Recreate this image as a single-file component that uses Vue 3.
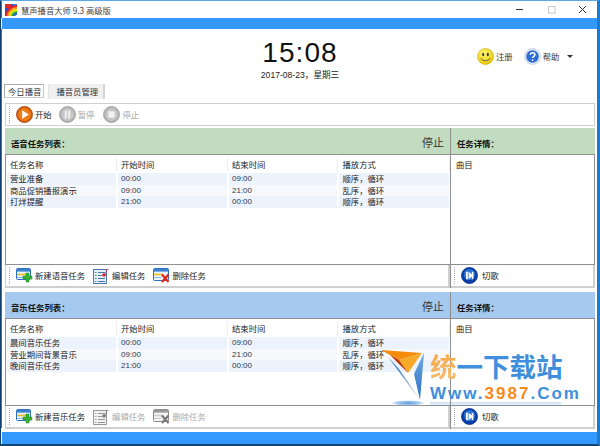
<script setup>
const panels = [
  {
    key: 'voice', tone: 'green', title: '语音任务列表：', add: '新建语音任务', off: false,
    rows: [
      ['营业准备', '00:00', '09:00', '顺序，循环'],
      ['商品促销播报演示', '09:00', '21:00', '乱序，循环'],
      ['打烊提醒', '21:00', '00:00', '顺序，循环']
    ]
  },
  {
    key: 'music', tone: 'blue', title: '音乐任务列表：', add: '新建音乐任务', off: true,
    rows: [
      ['晨间音乐任务', '00:00', '09:00', '顺序，循环'],
      ['营业期间背景音乐', '09:00', '21:00', '乱序，循环'],
      ['晚间音乐任务', '21:00', '00:00', '顺序，循环']
    ]
  }
]
const heads = ['任务名称', '开始时间', '结束时间', '播放方式']
</script>

<template>
  <div class="window">
    <div class="titlebar">
      <svg class="applogo" viewBox="0 0 12 12" width="12" height="12">
        <rect width="12" height="12" fill="#2b4fd0" />
        <rect width="6" height="4" fill="#e02a2a" />
        <rect x="8" width="4" height="12" fill="#3a7fe0" />
        <circle cx="12" cy="13" r="12" fill="#e8262a" />
        <circle cx="12" cy="13" r="10" fill="#f6a11c" />
        <circle cx="12" cy="13" r="8" fill="#f4e31e" />
        <circle cx="12" cy="13" r="6" fill="#2fae3a" />
        <circle cx="12" cy="13" r="4" fill="#2a62d8" />
        <circle cx="12" cy="13" r="2" fill="#fff" />
      </svg>
      <span class="apptitle">慧声播音大师 9.3 高级版</span>
      <div class="winbtns">
        <svg width="9" height="9" viewBox="0 0 9 9"><path d="M1 4.5h7" stroke="#333" stroke-width="1" /></svg>
        <svg width="9" height="9" viewBox="0 0 9 9"><rect x="1.5" y="1.5" width="6.5" height="6.5" fill="none" stroke="#c8c8c8" /></svg>
        <svg width="9" height="9" viewBox="0 0 9 9"><path d="M1 1l7 7M8 1l-7 7" stroke="#333" stroke-width="1" /></svg>
      </div>
    </div>
    <div class="bluebar"></div>

    <div class="content">
      <header class="top">
        <div class="clock">
          <div class="time">15:08</div>
          <div class="date">2017-08-23，星期三</div>
        </div>
        <div class="topmenu">
          <svg width="17" height="17" viewBox="0 0 17 17">
            <defs>
              <radialGradient id="sm" cx="40%" cy="30%" r="70%"><stop offset="0" stop-color="#fff97a" /><stop offset="1" stop-color="#e8c800" /></radialGradient>
            </defs>
            <circle cx="8.5" cy="8.5" r="8" fill="url(#sm)" stroke="#c9a800" stroke-width=".6" />
            <ellipse cx="6.2" cy="6.5" rx="1" ry="1.7" fill="#333" />
            <ellipse cx="10.8" cy="6.5" rx="1" ry="1.7" fill="#333" />
            <path d="M3.8 10.2c1.6 3.2 7.8 3.2 9.4 0" fill="none" stroke="#555" stroke-width=".9" />
          </svg>
          <span class="mlabel reg">注册</span>
          <svg class="help" width="17" height="17" viewBox="0 0 17 17">
            <circle cx="8.5" cy="8.5" r="8" fill="#dfe6f3" stroke="#b8c4dc" stroke-width=".6" />
            <circle cx="8.5" cy="8.5" r="6.2" fill="#2d6fd0" />
            <path d="M6.3 6.8c.2-2.6 4.6-2.6 4.6 0 0 1.7-2.3 1.6-2.3 3.3" fill="none" stroke="#fff" stroke-width="1.5" />
            <circle cx="8.6" cy="12.1" r=".9" fill="#fff" />
          </svg>
          <span class="mlabel">帮助</span>
          <span class="caret"></span>
        </div>
      </header>

      <nav class="tabs">
        <span class="tab active">今日播音</span>
        <span class="tab">播音员管理</span>
      </nav>

      <div class="playbar">
        <span class="grip"></span>
        <span class="tool first">
          <svg width="17" height="17" viewBox="0 0 17 17">
            <circle cx="8.5" cy="8.5" r="8" fill="#d9600f" stroke="#9c3f08" stroke-width=".8" />
            <circle cx="8.5" cy="8.5" r="6.2" fill="#ee7d17" />
            <path d="M6.2 4.2l6.6 4.3-6.6 4.3z" fill="#fff" />
          </svg>
          <span class="lbl">开始</span>
        </span>
        <span class="tool off">
          <svg width="17" height="17" viewBox="0 0 17 17">
            <circle cx="8.5" cy="8.5" r="8" fill="#b4b4b4" stroke="#999" stroke-width=".8" />
            <circle cx="8.5" cy="8.5" r="6.2" fill="#c6c6c6" />
            <path d="M5.8 4.5h2v8h-2zM9.2 4.5h2v8h-2z" fill="#f2f2f2" />
          </svg>
          <span class="lbl">暂停</span>
        </span>
        <span class="tool off stop">
          <svg width="17" height="17" viewBox="0 0 17 17">
            <circle cx="8.5" cy="8.5" r="8" fill="#b4b4b4" stroke="#999" stroke-width=".8" />
            <circle cx="8.5" cy="8.5" r="6.2" fill="#c6c6c6" />
            <rect x="5.3" y="5.3" width="6.4" height="6.4" fill="#f2f2f2" />
          </svg>
          <span class="lbl">停止</span>
        </span>
      </div>

      <section v-for="p in panels" :key="p.key" class="panel" :class="[p.tone, p.key]">
        <div class="leftcol">
          <div class="phead">
            <b>{{ p.title }}</b>
            <span class="state">停止</span>
          </div>
          <div class="plist">
            <div class="grid headrow">
              <span v-for="h in heads" :key="h">{{ h }}</span>
            </div>
            <div v-for="(r, i) in p.rows" :key="r[0]" class="grid datarow" :class="{ alt: i === 1 }">
              <span v-for="(c, j) in r" :key="j" :class="{ num: j === 1 || j === 2 }">{{ c }}</span>
            </div>
          </div>
          <div class="pbar">
            <span class="grip"></span>
            <span class="tool addtool">
              <svg width="17" height="15" viewBox="0 0 17 15">
                <rect x=".5" y=".5" width="14" height="11" rx="1" fill="#eaf2fb" stroke="#2f6fc0" />
                <rect x="1" y="1" width="13" height="2.6" fill="#3c80d0" />
                <path d="M1 6.5h9" stroke="#e8c020" stroke-width="1.6" />
                <path d="M1 9.5h7" stroke="#8fb5e0" stroke-width="1" />
                <path d="M10 5h3v3h3v3h-3v3h-3v-3H7V8h3z" fill="#36b030" stroke="#1f8a20" stroke-width=".5" />
              </svg>
              <span class="lbl">{{ p.add }}</span>
            </span>
            <span class="tool edittool" :class="{ off: p.off }">
              <svg class="ico" width="16" height="16" viewBox="0 0 16 16">
                <rect x=".5" y="1.5" width="13" height="14" fill="#e6eef8" stroke="#4a78b0" />
                <path d="M2 4.5h1.5M2 7.5h1.5M2 10.5h1.5M2 13.5h1.5" stroke="#28a040" stroke-width="1.2" />
                <path d="M5 4.5h7M5 7.5h4M5 10.5h7M5 13.5h7" stroke="#4a78b0" stroke-width="1" />
                <circle cx="11" cy="7" r="1.8" fill="#d8262a" />
                <path d="M12.5 6.5L14 1l1.5 1" fill="none" stroke="#b03030" stroke-width=".8" />
              </svg>
              <span class="lbl">编辑任务</span>
            </span>
            <span class="tool deltool" :class="{ off: p.off }">
              <svg class="ico" width="17" height="15" viewBox="0 0 17 15">
                <rect x=".5" y=".5" width="15" height="12" rx="1" fill="#eaf2fb" stroke="#2f6fc0" />
                <rect x="1" y="1" width="14" height="2.6" fill="#3c80d0" />
                <path d="M1 6.5h9" stroke="#e8c020" stroke-width="1.6" />
                <path d="M1 9.5h7" stroke="#8fb5e0" stroke-width="1" />
                <path d="M9 6.5l6.5 7.5M15.5 6.5L9 14" stroke="#e0261c" stroke-width="2.2" />
              </svg>
              <span class="lbl">删除任务</span>
            </span>
          </div>
        </div>
        <div class="rightcol">
          <div class="phead"><b>任务详情：</b></div>
          <div class="plist detail">曲目</div>
          <div class="pbar">
            <span class="grip"></span>
            <span class="tool nexttool">
              <svg width="17" height="17" viewBox="0 0 17 17">
                <circle cx="8.5" cy="8.5" r="8" fill="#0b3fa8" stroke="#07308a" stroke-width=".8" />
                <circle cx="8.5" cy="7.5" r="5.6" fill="#2a73d8" />
                <path d="M5 4.8h1.8v7.4H5zM7.6 4.8l4.6 3.7-4.6 3.7z" fill="#fff" />
                <rect x="10.8" y="4.8" width="1.6" height="7.4" fill="#fff" />
              </svg>
              <span class="lbl">切歌</span>
            </span>
          </div>
        </div>
      </section>
    </div>

    <div class="footerbar"></div>

    <div class="watermark">
      <svg class="wmlogo" width="46" height="60" viewBox="0 0 46 60">
        <defs>
          <linearGradient id="wmb" x1="0" y1="0" x2="1" y2="1"><stop offset="0" stop-color="#2f74c4" /><stop offset="1" stop-color="#8db8e4" /></linearGradient>
          <linearGradient id="wmr" x1="0" y1="0" x2="0" y2="1"><stop offset="0" stop-color="#6fa8e0" /><stop offset="1" stop-color="#2a72c4" /></linearGradient>
          <radialGradient id="wms"><stop offset="0" stop-color="#5b9bdc" /><stop offset=".7" stop-color="#a9cbee" /><stop offset="1" stop-color="#a9cbee" stop-opacity="0" /></radialGradient>
        </defs>
        <path d="M0 3L41 6 18 13z" fill="#f58c0c" />
        <path d="M18 13L41 6 27 26z" fill="#f7a928" />
        <path d="M9 8L27 26 18 13z" fill="#b9380f" />
        <path d="M7 10L39 53 18 22z" fill="url(#wmb)" />
        <path d="M43 6L39 53 33 27z" fill="url(#wmr)" />
        <ellipse cx="27" cy="56" rx="17" ry="2.8" fill="url(#wms)" />
      </svg>
      <div class="wmtext">
        <div class="wmcn"><span class="wmorange">统</span>一下载站</div>
        <div class="wmen">Www.<span class="wmo2">3987</span>.Com</div>
        <div class="wmreflect"></div>
      </div>
    </div>
  </div>
</template>

<style scoped>
.window {
  position: relative;
  width: 600px;
  height: 446px;
  box-sizing: border-box;
  display: flex;
  flex-direction: column;
  overflow: hidden;
  background: #fff;
  border-left: 1px solid #10406e;
  border-right: 3px solid #1a7ccf;
  border-top: 1px solid #5aa9e6;
  border-bottom: 2px solid #12456f;
  font-family: "Noto Sans CJK SC", "Liberation Sans", sans-serif;
  font-size: 8.35px;
  color: #222;
  line-height: 12px;
}
.titlebar {
  height: 17px;
  flex: none;
  display: flex;
  align-items: center;
  padding-left: 3px;
  border-left: 1px solid #1a7ccf;
}
.applogo { margin-right: 4px; margin-top: 1px; }
.apptitle { font-size: 8.3px; color: #444; }
.winbtns {
  margin-left: auto;
  display: flex;
  gap: 22.5px;
  padding-right: 10px;
}
.bluebar {
  height: 11px;
  flex: none;
  background: #3399ff;
  margin-left: 1px;
}
.content {
  flex: 1;
  display: flex;
  flex-direction: column;
  min-height: 0;
  border-left: 1px solid #1a7ccf;
  padding: 0 2px 0 3px;
  background: #fff;
}
.top {
  height: 55px;
  flex: none;
  position: relative;
  display: flex;
  justify-content: center;
}
.clock { text-align: center; padding-top: 9px; }
.time {
  font-family: "Liberation Sans", sans-serif;
  font-size: 28px;
  line-height: 30px;
  letter-spacing: 1.1px;
  color: #111;
}
.date {
  font-size: 8.6px;
  line-height: 12px;
  margin-top: 1px;
  font-family: "Liberation Sans", "Noto Sans CJK SC", sans-serif;
  color: #222;
  white-space: nowrap;
}
.topmenu {
  position: absolute;
  left: 472px;
  top: 19px;
  display: flex;
  align-items: center;
}
.mlabel { margin: -2px 0 0 2px; color: #333; }
.help { margin-left: 11px; }
.caret {
  margin-left: 8px;
  width: 0;
  height: 0;
  border-left: 3.5px solid transparent;
  border-right: 3.5px solid transparent;
  border-top: 3px solid #333;
}
.tabs {
  height: 15px;
  flex: none;
  display: flex;
  gap: 4px;
  align-items: flex-start;
  margin-left: -1px;
}
.tab {
  height: 15px;
  box-sizing: border-box;
  padding: 1px 5px 0 7px;
  background: #f0f0f0;
  border-left: 1px solid #e4e4e4;
  border-right: 2px solid #d4d4d4;
  color: #333;
  white-space: nowrap;
}
.tab.active {
  background: #fff;
  border: 1px solid #c8c8c8;
  border-top-color: #aaa;
  border-left-color: #aaa;
  padding: 0 2px 0 3px;
  height: 14px;
}
.playbar {
  height: 23px;
  flex: none;
  box-sizing: border-box;
  margin-top: 4px;
  border: 1px solid #cfcfcf;
  display: flex;
  align-items: center;
  position: relative;
  padding-left: 10px;
}
.grip {
  position: absolute;
  left: 3px;
  top: 2px;
  bottom: 2px;
  width: 0;
  border-left: 1px dotted #aaa;
}
.tool {
  display: inline-flex;
  align-items: center;
  gap: 2px;
  white-space: nowrap;
}
.lbl { margin-top: -2px; }
.tool.first { margin-right: 7px; }
.tool.off { color: #aaa; margin-right: 7px; }
.tool.stop { margin-left: 2px; }
.tool.off .ico { filter: grayscale(1) opacity(.75); }
.panel {
  flex: none;
  display: flex;
  margin-top: 2px;
}
.panel.music { margin-top: 4px; }
.leftcol { width: 445px; flex: none; display: flex; flex-direction: column; }
.rightcol { flex: 1; display: flex; flex-direction: column; border-left: 1px solid #8f8f8f; }
.phead {
  height: 27px;
  box-sizing: border-box;
  padding: 9px 6px 0 6px;
  display: flex;
  justify-content: space-between;
  align-items: flex-start;
  flex: none;
  border-bottom: 1px solid #8f8f8f;
}
.phead b { font-size: 8.4px; color: #111; font-weight: 700; }
.green .phead { background: #c1dcc0; }
.blue .phead { background: #a6caef; }
.state {
  font-size: 11px;
  line-height: 14px;
  margin-top: -2px;
  color: #333;
}
.plist {
  flex: none;
  box-sizing: border-box;
  border-left: 1px solid #8f8f8f;
  border-bottom: 1px solid #8f8f8f;
  padding: 2px 0 0 1px;
}
.voice .plist { height: 110px; }
.music .plist { height: 87px; }
.rightcol .plist { border-left: 0; border-right: 1px solid #8f8f8f; padding: 3px 0 0 5px; }
.grid {
  display: grid;
  grid-template-columns: 108.5px 109px 108.5px 110px;
  column-gap: 2px;
}
.headrow { height: 16px; align-items: center; }
.headrow span { padding-left: 3px; height: 14px; line-height: 13px; box-shadow: 1px 0 0 #eee; }
.headrow span:nth-child(n+2) { padding-left: 3.5px; }
.datarow { height: 11.67px; line-height: 11.67px; }
.datarow span { background: #edf3fd; padding-left: 3px; white-space: nowrap; overflow: hidden; }
.datarow span:nth-child(n+2) { padding-left: 3.5px; }
.datarow.alt span { background: #f7f8fb; }
.num { font-family: "Liberation Sans", sans-serif; font-size: 8px; color: #2b3550; }
.pbar {
  height: 23px;
  flex: none;
  box-sizing: border-box;
  position: relative;
  display: flex;
  align-items: center;
  padding-left: 10px;
  border-right: 2px solid #cfcfcf;
  border-bottom: 2px solid #cfcfcf;
}
.leftcol .pbar { border-left: 1px solid #cfcfcf; }
.edittool { margin-left: 8px; gap: 3px; margin-right: 8px; }
.tool.edittool.off { margin-right: 8px; }
.tool.deltool { gap: 2px; }
.rightcol .pbar { padding-left: 10px; }
.nexttool { gap: 4px; }

.footerbar {
  height: 12px;
  flex: none;
  margin-top: 4px;
  background: #3399ff;
  margin-left: 1px;
}
.watermark {
  position: absolute;
  left: 380px;
  top: 346px;
  display: flex;
  pointer-events: none;
}
.wmlogo { flex: none; }
.wmtext { margin-left: 3px; padding-top: 2px; }
.wmcn {
  font-size: 26.5px;
  line-height: 33px;
  font-weight: 700;
  color: #3f8fdc;
  white-space: nowrap;
}
.wmorange {
  background: linear-gradient(#f9a23a, #f5c078);
  -webkit-background-clip: text;
  background-clip: text;
  color: transparent;
}
.wmen {
  font-family: "Liberation Sans", sans-serif;
  font-size: 17px;
  line-height: 17px;
  margin-top: 3px;
  font-weight: 700;
  letter-spacing: 2px;
  color: #3f8fdc;
  white-space: nowrap;
}
.wmo2 { color: #f58a1c; }
.wmreflect {
  height: 5px;
  width: 131px;
  background: linear-gradient(rgba(63, 143, 220, .28), rgba(63, 143, 220, 0));
}
</style>
